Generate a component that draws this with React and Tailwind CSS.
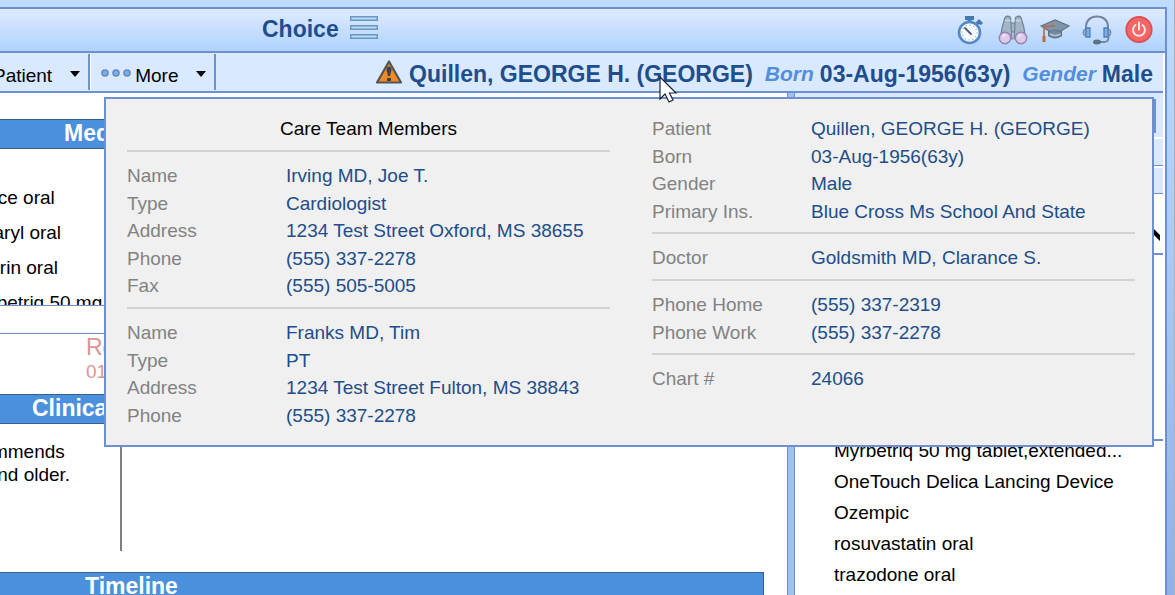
import clsx from 'clsx';

const careTeam = [
  [
    ['Name', 'Irving MD, Joe T.'],
    ['Type', 'Cardiologist'],
    ['Address', '1234 Test Street Oxford, MS 38655'],
    ['Phone', '(555) 337-2278'],
    ['Fax', '(555) 505-5005'],
  ],
  [
    ['Name', 'Franks MD, Tim'],
    ['Type', 'PT'],
    ['Address', '1234 Test Street Fulton, MS 38843'],
    ['Phone', '(555) 337-2278'],
  ],
];

const demographics = [
  [
    ['Patient', 'Quillen, GEORGE H. (GEORGE)'],
    ['Born', '03-Aug-1956(63y)'],
    ['Gender', 'Male'],
    ['Primary Ins.', 'Blue Cross Ms School And State'],
  ],
  [['Doctor', 'Goldsmith MD, Clarance S.']],
  [
    ['Phone Home', '(555) 337-2319'],
    ['Phone Work', '(555) 337-2278'],
  ],
  [['Chart #', '24066']],
];

const activeMeds = ['Altace oral', 'Amaryl oral', 'aspirin oral', 'Myrbetriq 50 mg'];

const medications = [
  'Myrbetriq 50 mg tablet,extended...',
  'OneTouch Delica Lancing Device',
  'Ozempic',
  'rosuvastatin oral',
  'trazodone oral',
];

function StopwatchIcon() {
  return (
    <svg viewBox="0 0 30 30" className="size-[30px]">
      <path d="M9 1h9v4h-2.500v4h-4V5H9z" fill="#4577b5" />
      <path d="m20 7 3-3 4 4-2 2-2-1-2 2z" fill="#4577b5" />
      <circle cx="13.500" cy="17.500" r="10.500" fill="#f4f9fd" stroke="#5688c3" strokeWidth="2.600" />
      <circle cx="13.500" cy="17.500" r="7.500" fill="none" stroke="#8fa9c2" strokeWidth="1.200" strokeDasharray="1 2.900" />
      <path d="m9 13 6 6" stroke="#4c5c6d" strokeWidth="1.800" strokeLinecap="round" />
    </svg>
  );
}

function BinocularsIcon() {
  return (
    <svg viewBox="0 0 30 30" className="size-[30px]">
      <g fill="#a3b5c7" stroke="#708296" strokeWidth="1.200">
        <path d="M12 8h6v9h-6z" />
        <path d="M7 2.500Q9.500 0 12.500 2.500L14 24H2L4.500 11z" />
        <path d="M23 2.500Q20.500 0 17.500 2.500L16 24h12l-2.500-13z" />
      </g>
      <path d="M7 5.500h5.500M17.500 5.500H23" stroke="#c7d4e1" strokeWidth="1.500" />
      <circle cx="7" cy="23" r="5.700" fill="#dccbea" stroke="#9683af" strokeWidth="1.500" />
      <circle cx="23" cy="23" r="5.700" fill="#dccbea" stroke="#9683af" strokeWidth="1.500" />
      <path d="M4.500 22q1-2 3-2M20.500 22q1-2 3-2" stroke="#f3eafa" strokeWidth="1.500" fill="none" />
    </svg>
  );
}

function GraduationIcon() {
  return (
    <svg viewBox="0 0 30 30" className="size-[30px]">
      <path d="M8.500 13v8q6.500 4 13 0v-8z" fill="#74889b" stroke="#5a6f84" />
      <path d="M10 19q5 3 10.500 0" stroke="#b0c0cf" strokeWidth="1.500" fill="none" />
      <path d="m1 11 14-6 14 6-9 5.500q-5-3-10 0z" fill="#8195a8" stroke="#5e7388" strokeWidth="1.200" />
      <path d="M15 10.500 4 12v11" fill="none" stroke="#b9693d" strokeWidth="1.600" />
      <path d="M2.500 21h3v6h-3z" fill="#b9693d" />
    </svg>
  );
}

function HeadsetIcon() {
  return (
    <svg viewBox="0 0 30 30" className="size-[30px]">
      <path d="M4 14V12C4 5 9 1.500 15 1.500S26 5 26 12v2" fill="none" stroke="#72859a" strokeWidth="2" />
      <path d="M26.500 20v3q0 4-5 4H15" fill="none" stroke="#72859a" strokeWidth="1.800" />
      <path d="M4 14q-3 0-3 3.500T4 21M26 14q3 0 3 3.500T26 21" fill="#95aabf" stroke="#72859a" />
      <path d="M4 13h4v9H4zM22 13h4v9h-4z" fill="#7eafe6" stroke="#4b7fbd" strokeWidth="1.300" />
      <ellipse cx="15" cy="27" rx="4" ry="2.500" fill="#5c7086" />
    </svg>
  );
}

function PowerIcon() {
  return (
    <svg viewBox="0 0 30 30" className="size-[30px]">
      <circle cx="15" cy="14.500" r="12.700" fill="#f36666" stroke="#dc4e50" strokeWidth="1.800" />
      <path d="M11.500 10a6 6 0 1 0 7 0M15 7.500v7" fill="none" stroke="#ffe6e6" strokeWidth="2" strokeLinecap="round" />
    </svg>
  );
}

function WarningIcon() {
  return (
    <svg viewBox="0 0 28 26" className="mb-1 h-[26px] w-7">
      <path d="M14 2.500 26 23.500H2z" fill="#ef8a24" stroke="#545454" strokeWidth="2.200" strokeLinejoin="round" />
      <path d="M11.500 11q0-3.500 2.500-3.500t2.500 3.500L15 17h-2z" fill="#3b424c" />
      <path d="M12 19h4v3h-4z" fill="#3b424c" />
    </svg>
  );
}

const tools = [
  ['Timer', StopwatchIcon],
  ['Search', BinocularsIcon],
  ['Education', GraduationIcon],
  ['Support', HeadsetIcon],
  ['Log out', PowerIcon],
];

function Caret() {
  return (
    <svg viewBox="0 0 10 6" className="mb-1 h-1.5 w-2.5">
      <path d="M0 0h10L5 6z" />
    </svg>
  );
}

function SectionBar({ title, className }) {
  return (
    <h2
      className={clsx(
        'mr-[23px] h-[30px] shrink-0 border-y border-r border-[#35608f] bg-[#4a90dc] text-[23px] leading-[27px] font-bold text-white',
        className,
      )}
    >
      {title}
    </h2>
  );
}

function Details({ rows }) {
  return (
    <dl>
      {rows.map(([label, value]) => (
        <div key={label} className="flex leading-[27px] odd:pb-px">
          <dt className="w-[159px] shrink-0 text-[#828282]">{label}</dt>
          <dd className="whitespace-nowrap text-[#214d8a]">{value}</dd>
        </div>
      ))}
    </dl>
  );
}

function Rule() {
  return <hr className="mt-[7px] mb-2.5 border-t-2 border-[#d2d2d2]" />;
}

function PatientPopup() {
  return (
    <div className="absolute top-1 right-[11px] left-[104px] grid grid-cols-2 gap-[42px] border-2 border-[#6f90d0] bg-[#f0f0f0] pt-4 pr-[17px] pb-4 pl-[21px] text-[19px]">
      <section>
        <h3 className="text-center leading-7 text-black">Care Team Members</h3>
        {careTeam.map((member, index) => (
          <div key={index}>
            <Rule />
            <Details rows={member} />
          </div>
        ))}
      </section>
      <section>
        {demographics.map((group, index) => (
          <div key={index}>
            {index > 0 && <Rule />}
            <Details rows={group} />
          </div>
        ))}
      </section>
    </div>
  );
}

function TitleBar() {
  return (
    <header className="flex h-[46px] shrink-0 items-center border-y-2 border-[#6f90d0] bg-linear-to-b from-[#deebff] to-[#afd2ff] pr-[11px] pl-[262px]">
      <h1 className="mb-0.5 text-[23px] font-bold text-[#204d8b]">Choice</h1>
      <button aria-label="Menu" className="mb-1.5 ml-[11px]">
        <svg viewBox="0 0 28 23" className="h-[23px] w-7">
          <g fill="#b5dcf2" stroke="#6c94c4" strokeWidth="1.500">
            <path d="M.7.700h26.600v3.600H.700zM.7 9.700h26.600v3.600H.700zM.7 18.700h26.600v3.600H.700z" />
          </g>
        </svg>
      </button>
      <div className="ml-auto flex gap-3">
        {tools.map(([name, Icon]) => (
          <button key={name} aria-label={name}>
            <Icon />
          </button>
        ))}
      </div>
    </header>
  );
}

function Toolbar() {
  return (
    <div className="mr-0.5 flex h-10 shrink-0 items-center border-b-2 border-[#6f90d0] bg-[#d9e9ff] pr-2.5">
      <button className="-ml-[7px] flex h-9 items-center gap-[18px] border-r-2 border-[#6f90d0] pt-2 pr-2 text-[19px]">
        Patient
        <Caret />
      </button>
      <button className="flex h-9 items-center border-r-2 border-l border-r-[#6f90d0] border-l-white pt-2 pr-2 pl-2.5 text-[19px]">
        <svg viewBox="0 0 30 8" className="mb-1.5 h-2 w-[30px]">
          <g fill="#82ade3" stroke="#5b89c9" strokeWidth="1.500">
            <circle cx="4" cy="4" r="3" />
            <circle cx="15" cy="4" r="3" />
            <circle cx="26" cy="4" r="3" />
          </g>
        </svg>
        <span className="mr-[18px] ml-1">More</span>
        <Caret />
      </button>
      <div className="ml-auto flex items-center pt-1 text-[23px] leading-9 font-bold whitespace-nowrap text-[#204d8b]">
        <WarningIcon />
        <span className="ml-1.5">Quillen, GEORGE H. (GEORGE)</span>
        <span className="mr-1.5 ml-3 text-[21px] text-[#528edb] italic">Born</span>
        <span>03-Aug-1956(63y)</span>
        <span className="mr-1.5 ml-3 text-[21px] text-[#528edb] italic">Gender</span>
        <span>Male</span>
      </div>
    </div>
  );
}

function ChartPanel() {
  return (
    <section className="flex min-w-0 flex-1 flex-col overflow-hidden bg-white">
      <SectionBar title="Meds" className="mt-[26px] pl-16" />
      <ul className="mt-[31px] -ml-[35px] h-[125px] shrink-0 overflow-hidden text-[19px] leading-[35px]">
        {activeMeds.map((med) => (
          <li key={med}>{med}</li>
        ))}
      </ul>
      <div className="h-[29px] shrink-0 border-y border-[#6f90d0]" />
      <div className="h-[60px] shrink-0 pl-[86px] text-[#dc9595]">
        <p className="text-[23px] leading-[27px]">Re</p>
        <p className="text-[19px] leading-[22px]">01</p>
      </div>
      <SectionBar title="Clinical" className="pl-8" />
      <div className="h-[127px] w-[122px] shrink-0 border-r-2 border-[#808080] pt-4 text-[19px] leading-[23px]">
        <p className="-ml-[45px] whitespace-nowrap">recommends</p>
        <p className="-ml-[45px] whitespace-nowrap">65, and older.</p>
      </div>
      <SectionBar title="Timeline" className="mt-[21px] pl-[85px]" />
    </section>
  );
}

function MedicationPanel() {
  return (
    <aside className="mr-0.5 flex w-[368px] shrink-0 flex-col bg-white">
      <div className="h-[46px] shrink-0 border-b-2 border-white bg-[#d9e9ff] pt-1.5 pr-[7px]">
        <div className="h-[34px] border-2 border-[#6f90d0]" />
      </div>
      <div className="h-[27px] shrink-0 border-b border-[#6f90d0] bg-[#d9e9ff]" />
      <div className="mt-0.5 h-[26px] shrink-0 border-b border-[#6f90d0] bg-[#d9e9ff]" />
      <div className="flex h-[61px] shrink-0 items-end justify-end border-b-2 border-[#6f90d0] pr-[3px] pb-3">
        <svg viewBox="0 0 10 14" className="h-3.5 w-2.5">
          <path d="m0 0 3 1 7 7v6L3 7 0 6z" />
        </svg>
      </div>
      <div className="h-[186px] shrink-0 border-b-2 border-[#6f90d0]" />
      <ul className="-mt-[6px] pl-[39px] text-[19px] leading-[31px] whitespace-nowrap">
        {medications.map((med) => (
          <li key={med}>{med}</li>
        ))}
      </ul>
    </aside>
  );
}

function Cursor() {
  return (
    <svg viewBox="0 0 19 28" className="pointer-events-none absolute top-[76px] left-[659px] h-7 w-[19px]">
      <path d="M1 1v22l5-5 4 8 4-2-3.500-7H17z" fill="white" stroke="#17233c" strokeWidth="1.200" />
    </svg>
  );
}

function App() {
  return (
    <div className="relative flex h-screen overflow-hidden border-r border-[#b0b0b0] bg-linear-to-b from-[#bfdbff] to-[#8fb1e5] font-['Liberation_Sans',Arial,sans-serif] text-black">
      <div className="mr-[7px] flex min-w-0 flex-1 flex-col border-t-[7px] border-[#bfdbff]">
        <div className="flex min-h-0 flex-1 flex-col border-r-2 border-[#6f90d0] bg-white">
          <TitleBar />
          <Toolbar />
          <main className="relative flex min-h-0 flex-1">
            <ChartPanel />
            <div className="w-2 shrink-0 border-x border-[#6f90d0] bg-[#9fc0f0]" />
            <MedicationPanel />
            <PatientPopup />
          </main>
        </div>
      </div>
      <Cursor />
    </div>
  );
}

export default App;
